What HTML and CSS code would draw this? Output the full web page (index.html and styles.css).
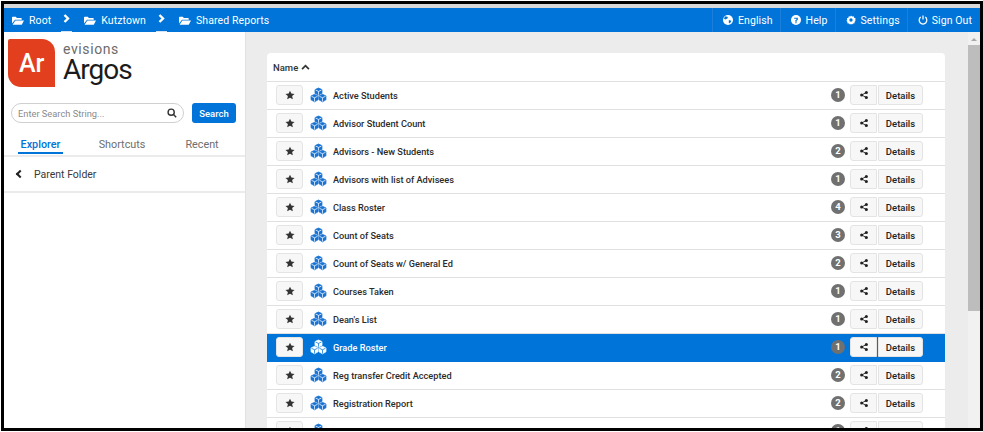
FILE: index.html
```html
<!DOCTYPE html>
<html lang="en">
<head>
    <meta charset="UTF-8">
    <title>Argos</title>
    <link rel="stylesheet" href="styles.css">
</head>
<body>
    <svg class="icon-defs" width="0" height="0">
        <symbol id="i-folder" viewBox="0 0 16 12">
            <path d="M0 10V2a1 1 0 0 1 1-1h4l1.500 1.500H12a1 1 0 0 1 1 1V5H4L0 10Z"/>
            <path d="M4.500 6H16l-3 5.500H0.800Z"/>
        </symbol>
        <symbol id="i-chevron" viewBox="0 0 7 9">
            <path d="M1.500 1L5 4.500 1.500 8"/>
        </symbol>
        <symbol id="i-star" viewBox="0 0 24 24">
            <path d="M12 1.500l3.200 7.100 7.700.8-5.800 5.200 1.700 7.600L12 18.300l-6.800 3.900 1.700-7.600L1.100 9.400l7.700-.8Z"/>
        </symbol>
        <symbol id="i-share" viewBox="0 0 12 12">
            <circle cx="2.500" cy="6" r="2.300"/>
            <circle cx="9.500" cy="2.300" r="2.300"/>
            <circle cx="9.500" cy="9.700" r="2.300"/>
            <path d="M2.500 6l7-3.700M2.500 6l7 3.700" stroke="currentColor" stroke-width="1.300"/>
        </symbol>
        <symbol id="i-cubes" viewBox="0 0 18 16">
            <g class="cube-body">
                <path d="M9 .6l3.700 1.700v3.900L9 8 5.300 6.200V2.300Z"/>
                <path d="M4.800 7.300l3.700 1.700v4.100l-3.700 2.100-3.700-2.100V9Z"/>
                <path d="M13.200 7.300l3.700 1.700v4.100l-3.700 2.100-3.700-2.100V9Z"/>
            </g>
            <path class="cube-line" d="M5.800 2.700L9 4.200l3.200-1.500M9 4.200v3.400M1.600 9.400l3.200 1.500 3.200-1.500M4.800 10.900v4M10 9.400l3.200 1.500 3.200-1.500M13.200 10.900v4"/>
        </symbol>
    </svg>

    <div class="frame">
        <header class="topbar">
            <nav class="crumbs">
                <a class="crumb"><svg class="folder"><use href="#i-folder"/></svg>Root</a>
                <span class="crumb-sep"><svg class="chevron"><use href="#i-chevron"/></svg></span>
                <a class="crumb"><svg class="folder"><use href="#i-folder"/></svg>Kutztown</a>
                <span class="crumb-sep"><svg class="chevron"><use href="#i-chevron"/></svg></span>
                <a class="crumb"><svg class="folder"><use href="#i-folder"/></svg>Shared Reports</a>
            </nav>
            <nav class="top-links">
                <a class="top-link">
                    <svg class="top-icon" viewBox="0 0 12 12"><circle cx="6" cy="6" r="6"/><path class="knock" d="M3 1.500l3 1-1 2-2.500 1L1 4ZM7 6l3 1-1.500 3-1.500-.5Z"/></svg>
                    English
                </a>
                <a class="top-link">
                    <svg class="top-icon" viewBox="0 0 12 12"><circle cx="6" cy="6" r="6"/><path class="knock" d="M3.800 3.200h4.400v2.600L6.800 7v1H5.200V6.300l1.400-1V4.500H3.800ZM5.200 8.600h1.600V10H5.200Z"/></svg>
                    Help
                </a>
                <a class="top-link">
                    <svg class="top-icon" viewBox="0 0 12 12"><path fill-rule="evenodd" d="M6 .5l1.300 1.400 1.900-.3.500 1.800 1.800.6-.4 1.900L11.500 7l-1.300 1.400.2 1.500-1.900.3L7.300 11.500 6 10.800l-1.300.7-1.200-1.300-1.900-.3.200-1.500L.5 7l1-1.100-.4-1.900 1.800-.6.500-1.800 1.900.3ZM6 4a2 2 0 1 0 0 4 2 2 0 0 0 0-4Z"/></svg>
                    Settings
                </a>
                <a class="top-link top-link-last">
                    <svg class="top-icon power" viewBox="0 0 12 12"><path d="M3.300 2.500a4.600 4.600 0 1 0 5.400 0M6 .5v5"/></svg>
                    Sign Out
                </a>
            </nav>
        </header>

        <div class="main">
            <aside class="sidebar">
                <div class="brand">
                    <div class="brand-mark">Ar</div>
                    <div class="brand-text">
                        <div class="brand-company">evisions</div>
                        <div class="brand-name">Argos</div>
                    </div>
                </div>
                <div class="search">
                    <div class="search-box">
                        <span class="search-hint">Enter Search String...</span>
                        <svg class="search-icon" viewBox="0 0 12 12"><circle cx="5" cy="5" r="3.700"/><path d="M7.800 7.800L11 11"/></svg>
                    </div>
                    <button class="search-button">Search</button>
                </div>
                <div class="tabs">
                    <a class="tab tab-active">Explorer</a>
                    <a class="tab">Shortcuts</a>
                    <a class="tab">Recent</a>
                </div>
                <div class="parent-folder">
                    <span class="parent-arrow"></span>
                    Parent Folder
                </div>
            </aside>

            <main class="content">
                <section class="report-list">
                    <div class="list-head">Name <svg class="sort-up" viewBox="0 0 10 7"><path d="M1 6l4-4 4 4"/></svg></div>
                    <div id="rows"></div>
                </section>
            </main>

            <div class="scrollbar">
                <div class="scroll-up"></div>
                <div class="scroll-thumb"></div>
            </div>
        </div>
    </div>

    <script>
        // Report rows: name, schedule count
        var reports = [
            ['Active Students', 1],
            ['Advisor Student Count', 1],
            ['Advisors - New Students', 2],
            ['Advisors with list of Advisees', 1],
            ['Class Roster', 4],
            ['Count of Seats', 3],
            ['Count of Seats w/ General Ed', 2],
            ['Courses Taken', 1],
            ["Dean's List", 1],
            ['Grade Roster', 1],
            ['Reg transfer Credit Accepted', 2],
            ['Registration Report', 2],
            ['Student Course Load', 1]
        ];

        var rows = document.getElementById('rows');
        reports.forEach(function(report, i) {
            var row = document.createElement('div');
            row.className = i === 9 ? 'row row-selected' : 'row';
            row.innerHTML =
                '<button class="btn star-btn"><svg class="star"><use href="#i-star"/></svg></button>' +
                '<svg class="cubes"><use href="#i-cubes"/></svg>' +
                '<span class="row-name">' + report[0] + '</span>' +
                '<span class="count">' + report[1] + '</span>' +
                '<button class="btn share-btn"><svg class="share"><use href="#i-share"/></svg></button>' +
                '<button class="btn details-btn">Details</button>';
            rows.appendChild(row);
        });
    </script>
</body>
</html>
```

FILE: styles.css
```css
html, body {
    margin: 0;
    padding: 0;
    height: 100%;
    overflow: hidden;
    font-family: Roboto, "Liberation Sans", sans-serif;
    background-color: #ffffff;
}

.icon-defs {
    display: block;
    height: 0;
}

.frame {
    box-sizing: border-box;
    height: 430px;
    margin: 1px 0 0 1px;
    display: flex;
    flex-direction: column;
    border: 3px solid #000000;
    overflow: hidden;
    background-color: #ffffff;
}

/* Top bar */
.topbar {
    box-sizing: border-box;
    flex: none;
    height: 28px;
    display: flex;
    justify-content: space-between;
    align-items: center;
    border-top: 4px solid #d8d8d8;
    background-color: #0074d9;
    color: #ffffff;
    font-size: 10.500px;
    letter-spacing: 0.1px;
}

.crumbs, .top-links {
    display: flex;
    align-items: center;
    height: 100%;
}

.crumbs {
    padding-left: 8px;
}

.crumb {
    display: flex;
    align-items: center;
}

.folder {
    width: 12px;
    height: 9px;
    margin-right: 5px;
    fill: #ffffff;
}

.crumb-sep {
    box-sizing: border-box;
    align-self: stretch;
    display: flex;
    align-items: center;
    padding: 0 2px;
    margin: 0 12px 0 10px;
    border-bottom: 1px solid #d4e4f4;
}

.chevron {
    width: 7px;
    height: 9px;
    margin-bottom: 2px;
    fill: none;
    stroke: #ffffff;
    stroke-width: 2.400;
}

.top-link {
    display: flex;
    align-items: center;
    height: 100%;
    padding: 0 7px 0 10px;
    border-left: 1px solid #1a80dc;
}

.top-link-last {
    padding-right: 8px;
}

.top-icon {
    width: 10px;
    height: 10px;
    margin-right: 5px;
    fill: #ffffff;
}

.top-link-last .top-icon {
    margin-right: 4px;
}

.top-icon .knock {
    fill: #0074d9;
}

.power {
    fill: none;
    stroke: #ffffff;
    stroke-width: 1.500;
}

.main {
    flex: 1;
    min-height: 0;
    display: flex;
}

/* Sidebar */
.sidebar {
    flex: none;
    width: 242px;
    border-right: 1px solid #e2e2e2;
    box-sizing: border-box;
    background-color: #ffffff;
}

.brand {
    display: flex;
    height: 56px;
    padding: 7px 0 0 4px;
}

.brand-mark {
    box-sizing: border-box;
    width: 47px;
    height: 48px;
    padding: 12px 0 0 11px;
    background-color: #e23f1f;
    border-radius: 2px 13px 0 13px;
    color: #ffffff;
    font-size: 25px;
    font-weight: 500;
    line-height: 1;
}

.brand-text {
    margin-left: 8px;
}

.brand-company {
    margin-top: 3px;
    color: #6b6b6b;
    font-size: 14px;
    line-height: 14px;
    letter-spacing: 0.6px;
}

.brand-name {
    color: #1b1b1b;
    font-size: 28px;
    line-height: 28px;
    letter-spacing: -1px;
}

.search {
    display: flex;
    align-items: center;
    margin: 8px 0 0 7px;
}

.search-box {
    box-sizing: border-box;
    width: 173px;
    height: 20px;
    display: flex;
    justify-content: space-between;
    align-items: center;
    padding: 0 6px 0 6px;
    border: 1px solid #cfcfcf;
    border-radius: 10px;
}

.search-hint {
    color: #8a8a8a;
    font-size: 9.300px;
}

.search-icon {
    width: 10px;
    height: 10px;
    fill: none;
    stroke: #333333;
    stroke-width: 1.700;
}

.search-button {
    width: 44px;
    height: 20px;
    margin-left: 8px;
    padding: 0;
    border: none;
    border-radius: 3px;
    background-color: #0074d9;
    color: #ffffff;
    font-family: inherit;
    font-size: 9.500px;
    font-weight: 500;
}

.tabs {
    display: flex;
    height: 17px;
    margin-top: 15px;
    border-bottom: 2px solid #ebebeb;
    font-size: 10.800px;
    color: #6e6e6e;
}

.tab {
    height: 14px;
    text-align: center;
    line-height: 13px;
}

.tab:nth-child(1) {
    width: 45px;
    margin-left: 14px;
}

.tab:nth-child(2) {
    width: 50px;
    margin-left: 34px;
}

.tab:nth-child(3) {
    width: 40px;
    margin-left: 35px;
}

.tab-active {
    color: #0074d9;
    font-weight: 500;
    border-bottom: 2px solid #0074d9;
}

.parent-folder {
    display: flex;
    align-items: center;
    height: 34px;
    padding-left: 13px;
    border-bottom: 2px solid #ebebeb;
    color: #3a3a3a;
    font-size: 10.500px;
}

.parent-arrow {
    width: 4px;
    height: 4px;
    margin-right: 11px;
    border: solid #222222;
    border-width: 0 0 2px 2px;
    transform: rotate(45deg);
}

/* Report list */
.content {
    flex: 1;
    min-width: 0;
    padding: 21px 23px 0 21px;
    background-color: #ececec;
    overflow: hidden;
}

.report-list {
    background-color: #ffffff;
    border-radius: 4px 4px 0 0;
}

.list-head {
    height: 28px;
    display: flex;
    align-items: center;
    padding-left: 6px;
    border-bottom: 1px solid #e0e0e0;
    color: #333333;
    font-size: 9.500px;
    font-weight: 500;
}

.sort-up {
    width: 9px;
    height: 6px;
    margin-left: 3px;
    fill: none;
    stroke: #333333;
    stroke-width: 2;
}

.row {
    box-sizing: border-box;
    height: 28px;
    display: flex;
    align-items: center;
    padding: 0 0 1px 9px;
    border-bottom: 1px solid #e0e0e0;
    color: #2b2b2b;
    --cube-fill: #1873d3;
    --cube-line: #ffffff;
}

.row-selected {
    background-color: #0074d9;
    color: #ffffff;
    border-bottom-color: #0074d9;
    --cube-fill: #ffffff;
    --cube-line: #0074d9;
}

.btn {
    box-sizing: border-box;
    height: 20px;
    padding: 0;
    border: 1px solid #e4e4e4;
    border-radius: 3px;
    background-color: #f7f7f7;
    color: #222222;
    font-family: inherit;
}

.star-btn {
    width: 27px;
    display: flex;
    align-items: center;
    justify-content: center;
}

.star {
    width: 10px;
    height: 10px;
    fill: #333333;
}

.cubes {
    flex: none;
    width: 17px;
    height: 16px;
    margin: 0 6px 0 7px;
}

.cube-body {
    fill: var(--cube-fill);
    stroke: var(--cube-fill);
    stroke-width: 0.800;
    stroke-linejoin: round;
}

.cube-line {
    fill: none;
    stroke: var(--cube-line);
    stroke-width: 0.800;
}

.row-name {
    flex: 1;
    font-size: 9.200px;
    font-weight: 500;
}

.count {
    width: 14px;
    height: 14px;
    border-radius: 50%;
    background-color: #707070;
    color: #ffffff;
    font-size: 9.500px;
    font-weight: 700;
    line-height: 14px;
    text-align: center;
}

.share-btn {
    width: 27px;
    margin-left: 5px;
    border-radius: 3px 0 0 3px;
    display: flex;
    align-items: center;
    justify-content: center;
}

.share {
    width: 8px;
    height: 8px;
    fill: #222222;
    color: #222222;
}

.details-btn {
    width: 45px;
    margin: 0 22px 0 1px;
    border-radius: 0 3px 3px 0;
    font-size: 9.500px;
    font-weight: 500;
}

/* Page scrollbar */
.scrollbar {
    flex: none;
    width: 12px;
    background-color: #f1f1f1;
}

.scroll-up {
    width: 0;
    height: 0;
    margin: 6px auto 0;
    border: solid transparent;
    border-width: 0 3px 3px;
    border-bottom-color: #a8a8a8;
}

.scroll-thumb {
    height: 266px;
    margin-top: 4px;
    background-color: #bdbdbd;
}
```
